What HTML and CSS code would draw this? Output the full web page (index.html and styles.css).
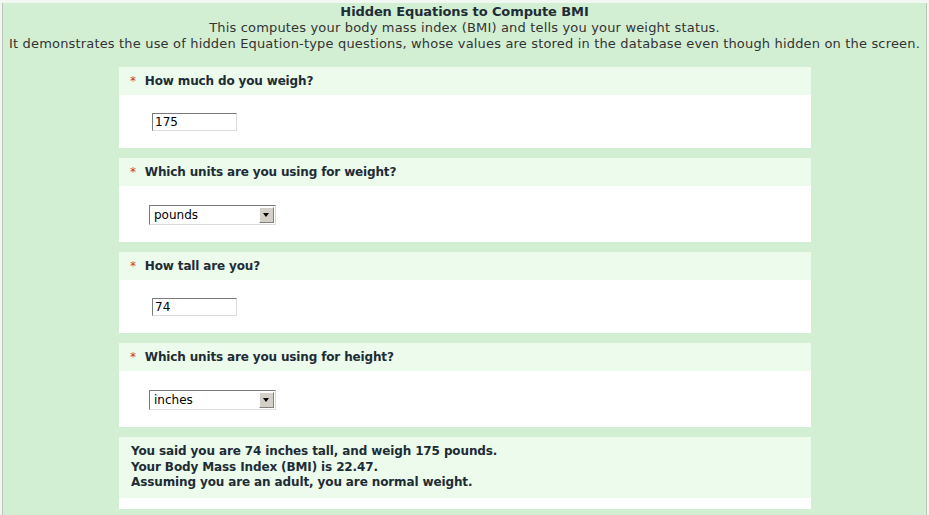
FILE: index.html
```html
<!DOCTYPE html>
<html lang="en">

<head>
    <meta charset="UTF-8">
    <title>Hidden Equations to Compute BMI</title>
    <link rel="stylesheet" href="styles.css">
</head>

<body>
    <div class="page">
        <div class="intro">
            <div class="title">Hidden Equations to Compute BMI</div>
            <div>This computes your body mass index (BMI) and tells you your weight status.</div>
            <div>It demonstrates the use of hidden Equation-type questions, whose values are stored in the database even though hidden on the screen.</div>
        </div>

        <div class="form">
            <div class="question">
                <div class="qhead"><span class="req">*</span>How much do you weigh?</div>
                <div class="qbody"><input class="textbox" type="text" value="175"></div>
            </div>

            <div class="question">
                <div class="qhead"><span class="req">*</span>Which units are you using for weight?</div>
                <div class="qbody tall">
                    <div class="select"><span>pounds</span><span class="arrow"></span></div>
                </div>
            </div>

            <div class="question">
                <div class="qhead"><span class="req">*</span>How tall are you?</div>
                <div class="qbody"><input class="textbox" type="text" value="74"></div>
            </div>

            <div class="question">
                <div class="qhead"><span class="req">*</span>Which units are you using for height?</div>
                <div class="qbody tall">
                    <div class="select"><span>inches</span><span class="arrow"></span></div>
                </div>
            </div>

            <div class="question result">
                <div class="rtext">
                    You said you are 74 inches tall, and weigh 175 pounds.<br>
                    Your Body Mass Index (BMI) is 22.47.<br>
                    Assuming you are an adult, you are normal weight.
                </div>
                <div class="rfoot"></div>
            </div>
        </div>
    </div>
</body>

</html>
```

FILE: styles.css
```css
html, body {
    margin: 0;
    padding: 0;
    height: 100%;
    overflow: hidden;
}

body {
    background: #f2f7f2;
    font-family: "DejaVu Sans", Verdana, sans-serif;
    font-size: 12px;
    color: #333;
}

.page {
    margin: 3px 2px 0 2px;
    border-left: 1px solid #b8c4b8;
    border-right: 1px solid #b8c4b8;
    background: #d3efd3;
    height: 100%;
}

.intro {
    text-align: center;
    line-height: 16px;
    padding-top: 1px;
    font-size: 13px;
    letter-spacing: 0.17px;
}

.title {
    font-weight: bold;
    color: #1e2c36;
    letter-spacing: -0.1px;
}

.form {
    width: 692px;
    margin: 15px 0 0 116px;
    display: flex;
    flex-direction: column;
    gap: 10px;
}

.question {
    background: #fff;
}

.qhead {
    background: #ecfbec;
    height: 28px;
    line-height: 28px;
    font-weight: bold;
    color: #1e2c36;
    padding-left: 11px;
    letter-spacing: -0.15px;
}

.req {
    color: #c23a3a;
    font-weight: normal;
    margin-right: 9px;
}

.qbody {
    height: 53px;
    padding-left: 33px;
    display: flex;
    align-items: center;
}

.qbody.tall {
    height: 56px;
}

.textbox {
    width: 79px;
    height: 14px;
    padding: 1px 2px;
    border: 1px solid #7a7a7a;
    border-right-color: #dcdcdc;
    border-bottom-color: #dcdcdc;
    font-family: "DejaVu Sans", sans-serif;
    font-size: 12px;
    color: #000;
    margin-top: 1px;
}

.select {
    width: 121px;
    height: 18px;
    border: 1px solid #7a7a7a;
    border-right-color: #dcdcdc;
    border-bottom-color: #dcdcdc;
    margin-left: -3px;
    margin-top: 2px;
    display: flex;
    align-items: center;
    justify-content: space-between;
    font-size: 12px;
    color: #000;
    padding-left: 4px;
}

.arrow {
    width: 15px;
    height: 16px;
    margin-right: 1px;
    background: #d4d0c8;
    border: 1px solid;
    border-color: #fff #808080 #808080 #fff;
    box-sizing: border-box;
    position: relative;
}

.arrow::after {
    content: "";
    position: absolute;
    left: 3px;
    top: 5px;
    border-left: 3.5px solid transparent;
    border-right: 3.5px solid transparent;
    border-top: 4px solid #000;
}

.result {
    background: #fff;
}

.rtext {
    background: #ecfbec;
    font-weight: bold;
    color: #1e2c36;
    line-height: 15.5px;
    padding: 7px 12px 7px 12px;
    letter-spacing: -0.12px;
}

.rfoot {
    height: 11px;
}
```
